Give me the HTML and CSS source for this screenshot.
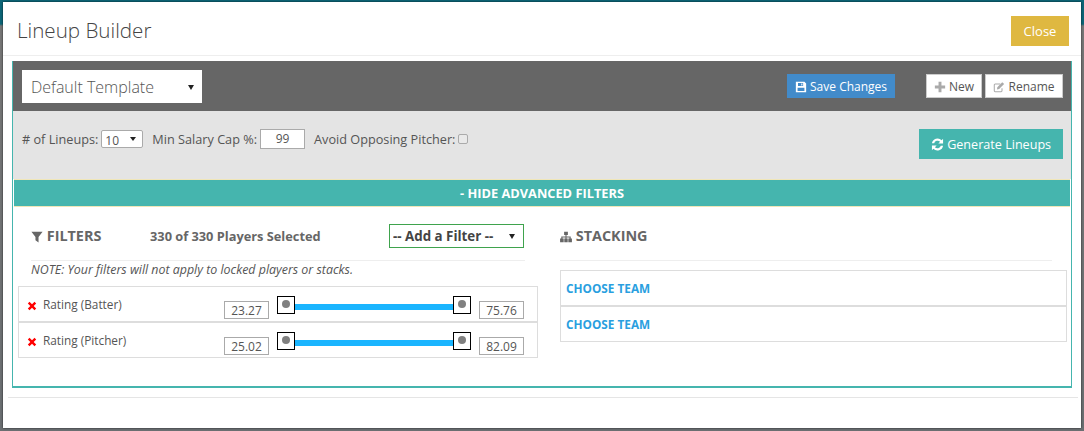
FILE: index.html
```html
<!DOCTYPE html>
<html lang="en">
<head>
    <meta charset="UTF-8">
    <meta name="viewport" content="width=device-width, initial-scale=1.0">
    <title>Lineup Builder</title>
    <link rel="stylesheet" href="styles.css">
</head>
<body>
    <div class="modal">
        <div class="modal-header">
            <h1>Lineup Builder</h1>
            <button class="close-button">Close</button>
        </div>

        <div class="builder">
            <div class="template-bar">
                <div class="select-wrap template-select">
                    <select><option>Default Template</option></select>
                </div>
                <button class="save-button">
                    <svg class="icon" viewBox="0 0 14 14"><path fill="currentColor" fill-rule="evenodd" d="M1 1h10l2 2v10H1zM3.500 2.200v3.600h6V2.200zM7.300 2.800h1.300v2.400H7.300zM3 8v3.800h8V8z"/></svg>
                    Save Changes
                </button>
                <div class="template-actions">
                    <button class="plain-button new-button">
                        <svg class="icon grey" viewBox="0 0 14 14"><path fill="currentColor" d="M5.300 1h3.400v4.300H13v3.400H8.700V13H5.300V8.700H1V5.300h4.300z"/></svg>
                        New
                    </button>
                    <button class="plain-button rename-button">
                        <svg class="icon grey" viewBox="0 0 14 14"><path fill="none" stroke="currentColor" stroke-width="1.200" d="M10.500 8.500v3a1 1 0 0 1-1 1h-7a1 1 0 0 1-1-1v-7a1 1 0 0 1 1-1h6"/><path fill="currentColor" d="M5 7.200 10.800 1.400 13 3.600 7.200 9.400 4.700 9.800z"/></svg>
                        Rename
                    </button>
                </div>
            </div>

            <div class="options-bar">
                <div class="options">
                    <label># of Lineups:</label>
                    <div class="select-wrap count-select">
                        <select><option>10</option></select>
                    </div>
                    <label class="cap-label">Min Salary Cap %:</label>
                    <input class="cap-input" type="text" value="99">
                    <label class="avoid-label">Avoid Opposing Pitcher:</label>
                    <input class="avoid-check" type="checkbox">
                </div>
                <button class="generate-button">
                    <svg class="icon refresh" viewBox="0 0 14 14"><path fill="currentColor" d="M13 .8v5.100H7.900l1.900-1.900A3.900 3.900 0 0 0 3.400 5.700H1A6.200 6.200 0 0 1 11.500 2.300zM1 13.200V8.100h5.100L4.200 10a3.900 3.900 0 0 0 6.400-1.700H13A6.200 6.200 0 0 1 2.500 11.700z"/></svg>
                    Generate Lineups
                </button>
            </div>

            <div class="toggle-bar">- HIDE ADVANCED FILTERS</div>

            <div class="advanced">
                <div class="filters">
                    <div class="section-head filters-head">
                        <h2>
                            <svg class="icon" viewBox="0 0 14 14"><path fill="currentColor" d="M.5 1h13L8.800 7v6.500l-3.600-2.700V7z"/></svg>
                            FILTERS
                        </h2>
                        <span class="selected-count">330 of 330 Players Selected</span>
                        <div class="select-wrap add-filter">
                            <select><option>-- Add a Filter --</option></select>
                        </div>
                    </div>
                    <p class="note">NOTE: Your filters will not apply to locked players or stacks.</p>
                    <div class="filter-row">
                        <svg class="remove" viewBox="0 0 12 12"><path fill="#f00" d="M3 1l3 3 3-3 2 2-3 3 3 3-2 2-3-3-3 3-2-2 3-3-3-3z"/></svg>
                        <span class="filter-name">Rating (Batter)</span>
                        <input class="range-value" type="text" value="23.27">
                        <div class="slider">
                            <span class="handle"></span><span class="track"></span><span class="handle"></span>
                        </div>
                        <input class="range-value" type="text" value="75.76">
                    </div>
                    <div class="filter-row">
                        <svg class="remove" viewBox="0 0 12 12"><path fill="#f00" d="M3 1l3 3 3-3 2 2-3 3 3 3-2 2-3-3-3 3-2-2 3-3-3-3z"/></svg>
                        <span class="filter-name">Rating (Pitcher)</span>
                        <input class="range-value" type="text" value="25.02">
                        <div class="slider">
                            <span class="handle"></span><span class="track"></span><span class="handle"></span>
                        </div>
                        <input class="range-value" type="text" value="82.09">
                    </div>
                </div>

                <div class="stacking">
                    <div class="section-head stacking-head">
                        <h2>
                            <svg class="icon sitemap" viewBox="0 0 14 14"><path fill="currentColor" d="M4.800 1h4.400v3.600H7.600v1.700h4.900v2.500h1.400V13H9.700V8.800h1.400V7.500H7.600v1.300H9V13H5V8.800h1.400V7.500H2.900v1.300h1.400V13H.1V8.800h1.400V6.300h4.900V4.600H4.800z"/></svg>
                            STACKING
                        </h2>
                    </div>
                    <div class="team-row"><a href="#">CHOOSE TEAM</a></div>
                    <div class="team-row"><a href="#">CHOOSE TEAM</a></div>
                </div>
            </div>
        </div>

        <div class="modal-footer"></div>
    </div>
</body>
</html>
```

FILE: styles.css
```css
* {
    box-sizing: border-box;
}
html, body {
    height: 431px;
    overflow: hidden;
}
body {
    margin: 0;
    padding: 2px 3px 3px 3px;
    font-family: "Open Sans", Arial, sans-serif;
    font-size: 12.7px;
    color: #555;
    background: linear-gradient(#0c6678 0, #0c6678 24px, #777 26px, #6b6f72 100%);
}
button, input, select {
    font-family: inherit;
    border-radius: 0;
}
button {
    cursor: pointer;
}
.modal {
    height: 426px;
    background-color: white;
    box-shadow: 0 0 2px rgba(0,0,0,0.7);
}
.modal-header {
    height: 54px;
    padding: 14px 12px 0 14px;
    display: flex;
    justify-content: space-between;
    border-bottom: 1px solid #eee;
}
.modal-header h1 {
    margin: 0;
    font-size: 20.600px;
    line-height: 29px;
    font-weight: 300;
    color: #444;
}
.close-button {
    width: 58px;
    height: 30px;
    padding: 0;
    border: none;
    background-color: #dfb841;
    color: white;
    font-size: 13px;
}
.builder {
    height: 327px;
    margin: 5px 9px 0 9px;
    border: 1px solid #45b5ae;
    border-top: none;
    border-bottom-width: 2px;
}
.icon {
    width: 12px;
    height: 12px;
    vertical-align: -2px;
}
.grey {
    color: #aaa;
}
.refresh {
    width: 13px;
    height: 13px;
}

/* selects */
.select-wrap {
    position: relative;
    background-color: white;
}
.select-wrap select {
    width: 100%;
    height: 100%;
    padding: 0;
    border: none;
    outline: none;
    background: transparent;
    appearance: none;
    color: inherit;
}
.select-wrap::after {
    content: "";
    position: absolute;
    top: 50%;
    right: 8px;
    margin-top: -2px;
    border-left: 3px solid transparent;
    border-right: 3px solid transparent;
    border-top: 5px solid #222;
    pointer-events: none;
}

/* top bar */
.template-bar {
    height: 50px;
    padding: 9px 8px 0 9px;
    display: flex;
    align-items: flex-start;
    background-color: #666;
}
.template-select {
    width: 180px;
    height: 33px;
}
.template-select select {
    padding-left: 9px;
    font-size: 16px;
    font-weight: 300;
    color: #555;
}
.save-button {
    width: 108px;
    height: 24px;
    margin: 4px 0 0 585px;
    padding: 0;
    border: none;
    background-color: #428bca;
    color: white;
    font-size: 12px;
}
.template-actions {
    margin: 4px 0 0 auto;
    display: flex;
    gap: 3px;
}
.plain-button {
    height: 24px;
    padding: 0;
    border: 1px solid #ccc;
    background-color: white;
    color: #555;
    font-size: 12px;
}
.new-button {
    width: 56px;
}
.rename-button {
    width: 78px;
}

/* options */
.options-bar {
    height: 68px;
    padding: 18px 8px 0 9px;
    display: flex;
    justify-content: space-between;
    align-items: flex-start;
    background-color: #e4e4e4;
}
.options {
    display: flex;
    align-items: center;
    height: 19px;
}
.count-select {
    width: 42px;
    height: 18px;
    margin-left: 3px;
    border: 1px solid #aaa;
    border-radius: 2px;
}
.count-select select {
    padding-left: 3px;
    font-size: 12px;
}
.count-select::after {
    right: 6px;
    border-top-width: 4px;
}
.cap-label {
    margin-left: 9px;
}
.cap-input {
    width: 45px;
    height: 20px;
    margin-left: 3px;
    border: 1px solid #aaa;
    text-align: center;
    font-size: 12px;
    color: #555;
}
.avoid-label {
    margin-left: 9px;
}
.avoid-check {
    width: 10px;
    height: 10px;
    margin: 0 0 0 3px;
    appearance: none;
    border: 1px solid #aaa;
    border-radius: 2px;
    background-color: #e9e9e9;
}
.generate-button {
    width: 144px;
    height: 30px;
    padding: 0;
    border: none;
    background-color: #45b5ae;
    color: white;
    font-size: 12.600px;
}
.toggle-bar {
    height: 28px;
    margin: 0 1px;
    background-color: #45b5ae;
    border-top: 1px solid #f0e6b8;
    border-bottom: 1px solid #f0e6b8;
    color: white;
    font-size: 12.800px;
    font-weight: 700;
    line-height: 26px;
    text-align: center;
}

/* filters and stacking */
.advanced {
    display: flex;
    padding-left: 5px;
}
.filters {
    width: 520px;
}
.stacking {
    width: 507px;
    margin-left: 22px;
}
.section-head {
    height: 54px;
    border-bottom: 1px solid #eee;
    display: flex;
    align-items: center;
    padding-top: 4px;
}
.section-head h2 {
    margin: 0;
    font-size: 14.400px;
    font-weight: 700;
    color: #666;
}
.filters-head {
    margin: 0 13px;
}
.filters-head h2 {
    width: 119px;
}
.selected-count {
    width: 239px;
    font-size: 12.800px;
    font-weight: 700;
    color: #666;
}
.add-filter {
    width: 135px;
    height: 24px;
    border: 1px solid #3fa34d;
    font-size: 11px;
    color: #444;
}
.add-filter select {
    padding-left: 3px;
    font-weight: 700;
}
.stacking-head {
    width: 492px;
    margin-bottom: 9px;
}
.note {
    height: 25px;
    margin: 0 0 0 13px;
    font-size: 12.400px;
    font-style: italic;
    line-height: 18px;
}
.filter-row {
    height: 36px;
    border: 1px solid #ddd;
    display: flex;
    align-items: flex-start;
    padding-left: 8px;
}
.remove {
    width: 10px;
    height: 10px;
    margin-top: 14px;
}
.filter-name {
    width: 181px;
    margin-left: 6px;
    margin-top: 9px;
    font-size: 11.800px;
    line-height: 16px;
}
.range-value {
    width: 45px;
    height: 18px;
    margin-top: 14px;
    padding: 0;
    border: 1px solid #aaa;
    text-align: center;
    font-size: 12px;
    color: #555;
}
.slider {
    width: 194px;
    margin: 9px 8px 0 8px;
    display: flex;
    align-items: flex-start;
}
.handle {
    position: relative;
    flex: none;
    width: 18px;
    height: 18px;
    border: 1px solid black;
    background-color: white;
}
.handle::after {
    content: "";
    position: absolute;
    top: 3px;
    left: 4px;
    width: 8px;
    height: 8px;
    border-radius: 50%;
    background-color: #808080;
}
.track {
    flex: 1;
    height: 6px;
    margin-top: 8px;
    background-color: #1ab5ff;
}
.team-row {
    height: 36px;
    padding-left: 5px;
    border: 1px solid #ddd;
    font-size: 11.800px;
    font-weight: 700;
    line-height: 35px;
}
.team-row a {
    color: #2a9fe0;
    text-decoration: none;
}
.modal-footer {
    margin: 9px 3px 0 5px;
    border-top: 1px solid #e5e5e5;
}
```
